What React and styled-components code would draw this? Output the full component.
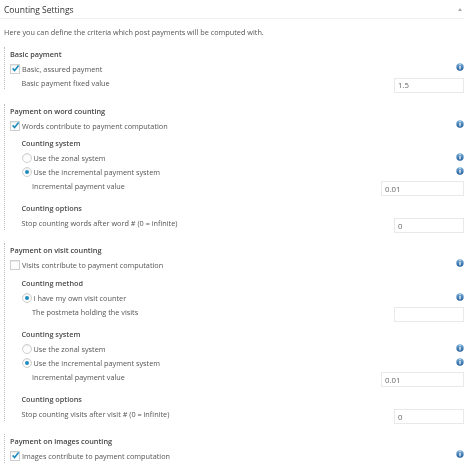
import React from "react";
import styled, { createGlobalStyle } from "styled-components";

const Global = createGlobalStyle`
  html, body { margin: 0; padding: 0; background: #fff; }
  body { font-family: "Open Sans", "Noto Sans", sans-serif; color: #555; }
`;

const Page = styled.div`
  width: 470px;
  height: 467px;
  overflow: hidden;
  box-sizing: border-box;
  padding-right: 6px;
  filter: blur(0.4px);
`;

const Header = styled.header`
  height: 18px;
  display: flex;
  align-items: center;
  justify-content: space-between;
  padding: 0 2px 0 4px;
  border-bottom: 1px solid #f0f0f0;
`;

const HeaderTitle = styled.h2`
  margin: 0;
  font-size: 8.5px;
  font-weight: 400;
  color: #333;
`;

const Collapse = styled.span`
  width: 0;
  height: 0;
  border-left: 2.5px solid transparent;
  border-right: 2.5px solid transparent;
  border-bottom: 3px solid #aaa;
`;

const Intro = styled.p`
  margin: 0;
  padding-left: 4px;
  height: 28px;
  line-height: 27px;
  font-size: 7.3px;
  color: #555;
`;

const Section = styled.section`
  margin-left: 4px;
  padding-left: 5px;
  border-left: 1px dotted #bbb;
  margin-bottom: ${(p) => p.$after ?? 13}px;
`;

const SectionTitle = styled.h3`
  margin: 0;
  height: 14px;
  line-height: 14px;
  font-size: 7.3px;
  font-weight: 600;
  color: #444;
`;

const Group = styled.div`
  margin-top: ${(p) => p.$top ?? 0}px;
  padding-left: 11.5px;
`;

const GroupTitle = styled.h4`
  margin: 0;
  height: 16px;
  line-height: 16px;
  font-size: 7.3px;
  font-weight: 600;
  color: #4a4a4a;
`;

const Row = styled.div`
  height: ${(p) => p.$h ?? 14}px;
  display: flex;
  align-items: center;
  gap: 2px;
  font-size: 7.3px;
  color: #555;
`;

const Label = styled.span`
  flex: 1;
  padding-left: ${(p) => p.$indent ?? 0}px;
  white-space: nowrap;
`;

const CheckBox = styled.span`
  width: 8px;
  height: 8px;
  flex: none;
  border: 1px solid #cfcfcf;
  background: #fdfdfd;
  position: relative;
  display: block;
  box-shadow: inset 0 1px 1px rgba(0, 0, 0, 0.08);
  svg { position: absolute; left: 0; top: -1px; }
`;

const Radio = styled.span`
  width: 8px;
  height: 8px;
  flex: none;
  border: 1px solid #cfcfcf;
  border-radius: 50%;
  background: #fdfdfd;
  display: flex;
  align-items: center;
  justify-content: center;
  box-shadow: inset 0 1px 1px rgba(0, 0, 0, 0.08);
  &::after {
    content: "";
    width: 4px;
    height: 4px;
    border-radius: 50%;
    background: ${(p) => (p.$on ? "#1e8cbe" : "transparent")};
  }
`;

const Field = styled.input`
  box-sizing: border-box;
  width: ${(p) => p.$w ?? 70}px;
  height: 15px;
  margin-top: 5px;
  padding: 0 3px;
  flex: none;
  border: 1px solid #e9e9e9;
  background: #fff;
  font: 7.8px "Open Sans", sans-serif;
  color: #666;
  outline: none;
`;

const InfoWrap = styled.span`
  flex: none;
  margin: 0 0 3px 0;
  display: flex;
`;

const Info = () => (
  <InfoWrap>
    <svg width="8" height="8" viewBox="0 0 8 8">
      <defs>
        <linearGradient id="ig" x1="0" y1="0" x2="0" y2="1">
          <stop offset="0" stopColor="#7fb2dc" />
          <stop offset="1" stopColor="#1c5a98" />
        </linearGradient>
      </defs>
      <circle cx="4" cy="4" r="3.7" fill="url(#ig)" />
      <rect x="3.4" y="1.2" width="1.2" height="1" fill="#fff" />
      <rect x="3.4" y="3" width="1.2" height="3.4" fill="#fff" />
    </svg>
  </InfoWrap>
);

const Check = ({ on, children }) => (
  <Row $h={15}>
    <CheckBox>
      {on && (
        <svg width="9" height="9" viewBox="0 0 9 9">
          <path d="M1.6 4.4 L3.6 6.6 L7.6 1.6" fill="none" stroke="#1e8cbe" strokeWidth="1.6" />
        </svg>
      )}
    </CheckBox>
    <Label>{children}</Label>
    <Info />
  </Row>
);

const Choice = ({ on, children }) => (
  <Row>
    <Radio $on={on} />
    <Label>{children}</Label>
    <Info />
  </Row>
);

const Value = ({ label, value, w, h, indent }) => (
  <Row $h={h ?? 14}>
    <Label $indent={indent}>{label}</Label>
    <Field $w={w} defaultValue={value} />
  </Row>
);

const Incremental = () => (
  <Value indent={10.5} w={83} label="Incremental payment value" value="0.01" />
);

export default function App() {
  return (
    <Page>
      <Global />
      <Header>
        <HeaderTitle>Counting Settings</HeaderTitle>
        <Collapse />
      </Header>
      <Intro>Here you can define the criteria which post payments will be computed with.</Intro>

      <Section $after={15}>
        <SectionTitle>Basic payment</SectionTitle>
        <Check on>Basic, assured payment</Check>
        <Group>
          <Value h={13} label="Basic payment fixed value" value="1.5" />
        </Group>
      </Section>

      <Section>
        <SectionTitle>Payment on word counting</SectionTitle>
        <Check on>Words contribute to payment computation</Check>
        <Group $top={2}>
          <GroupTitle>Counting system</GroupTitle>
          <Choice>Use the zonal system</Choice>
          <Choice on>Use the incremental payment system</Choice>
          <Incremental />
        </Group>
        <Group $top={7}>
          <GroupTitle>Counting options</GroupTitle>
          <Value label="Stop counting words after word # (0 = infinite)" value="0" />
        </Group>
      </Section>

      <Section>
        <SectionTitle>Payment on visit counting</SectionTitle>
        <Check>Visits contribute to payment computation</Check>
        <Group $top={3}>
          <GroupTitle>Counting method</GroupTitle>
          <Choice on>I have my own visit counter</Choice>
          <Value indent={10.5} label="The postmeta holding the visits" value="" />
        </Group>
        <Group $top={7}>
          <GroupTitle>Counting system</GroupTitle>
          <Choice>Use the zonal system</Choice>
          <Choice on>Use the incremental payment system</Choice>
          <Incremental />
        </Group>
        <Group $top={7}>
          <GroupTitle>Counting options</GroupTitle>
          <Value label="Stop counting visits after visit # (0 = infinite)" value="0" />
        </Group>
      </Section>

      <Section $after={0}>
        <SectionTitle>Payment on images counting</SectionTitle>
        <Check on>Images contribute to payment computation</Check>
      </Section>
    </Page>
  );
}
